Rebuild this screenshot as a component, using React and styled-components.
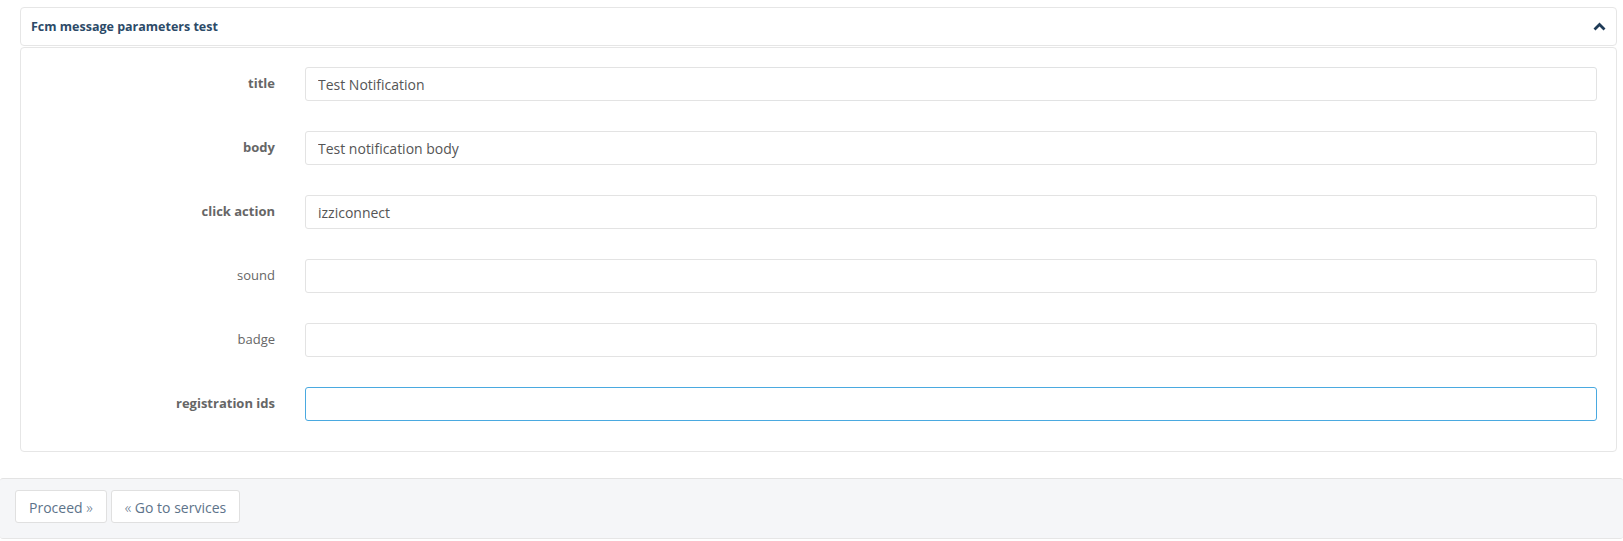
import React from 'react';
import styled, { createGlobalStyle } from 'styled-components';

const GlobalStyle = createGlobalStyle`
  html, body {
    margin: 0;
    padding: 0;
    background: #ffffff;
    font-family: 'Open Sans', 'Liberation Sans', sans-serif;
  }
`;

const fields = [
  { label: 'title', value: 'Test Notification', required: true },
  { label: 'body', value: 'Test notification body', required: true },
  { label: 'click action', value: 'izziconnect', required: true },
  { label: 'sound', value: '' },
  { label: 'badge', value: '' },
  { label: 'registration ids', value: '', required: true, focused: true },
];

const App = () => (
  <>
    <GlobalStyle />
    <Page>
      <Content>
        <PanelHeader>
          <PanelTitle>Fcm message parameters test</PanelTitle>
          <svg width="13" height="9" viewBox="0 0 13 9">
            <polyline
              points="1.5,7.5 6.5,2.5 11.5,7.5"
              fill="none"
              stroke="#1f3b57"
              strokeWidth="2.8"
            />
          </svg>
        </PanelHeader>
        <PanelBody>
          {fields.map((f) => (
            <FormRow key={f.label}>
              <Label $bold={f.required}>{f.label}</Label>
              <Input defaultValue={f.value} $focused={f.focused} />
            </FormRow>
          ))}
        </PanelBody>
      </Content>
      <Footer>
        <Button>Proceed <Angle>»</Angle></Button>
        <Button><Angle>«</Angle> Go to services</Button>
      </Footer>
    </Page>
  </>
);

export default App;

const Page = styled.div`
  display: flex;
  flex-direction: column;
  width: 100%;
  min-height: 541px;
`;

const Content = styled.div`
  display: flex;
  flex-direction: column;
  gap: 1px;
  padding: 7px 6px 0 20px;
`;

const PanelHeader = styled.div`
  display: flex;
  align-items: center;
  justify-content: space-between;
  height: 37px;
  padding: 0 10px 0 10px;
  border: 1px solid #e6e6e6;
  border-radius: 4px;
  background: #fff;
`;

const PanelTitle = styled.span`
  font-size: 12.5px;
  font-weight: 700;
  color: #2c4a68;
`;

const PanelBody = styled.div`
  display: flex;
  flex-direction: column;
  gap: 30px;
  padding: 19px 19px 30px 0;
  border: 1px solid #e6e6e6;
  border-radius: 4px;
  background: #fff;
`;

const FormRow = styled.div`
  display: flex;
  align-items: center;
  gap: 30px;
`;

const Label = styled.label`
  width: 254px;
  flex-shrink: 0;
  text-align: right;
  font-size: 13px;
  font-weight: ${(p) => (p.$bold ? 700 : 400)};
  color: #666;
  margin-top: -3px;
`;

const Input = styled.input`
  flex: 1;
  box-sizing: border-box;
  height: 34px;
  padding: 0 12px;
  border: 1px solid ${(p) => (p.$focused ? '#4aa9e0' : '#e3e3e3')};
  border-radius: 3px;
  font-family: 'Open Sans', 'Liberation Sans', sans-serif;
  font-size: 14px;
  color: #555;
  background: #fff;
  outline: none;
`;

const Footer = styled.div`
  display: flex;
  gap: 4px;
  margin-top: 26px;
  padding: 11px 15px 15px;
  background: #f5f6f8;
  border-top: 1px solid #e3e3e3;
  border-bottom: 1px solid #e6e6e6;
  border-radius: 3px;
`;

const Button = styled.button`
  box-sizing: border-box;
  height: 33px;
  padding: 0 13px;
  border: 1px solid #e0e0e0;
  border-radius: 3px;
  background: #fff;
  font-family: 'Open Sans', 'Liberation Sans', sans-serif;
  font-size: 14px;
  color: #5d738a;
  cursor: pointer;
`;

const Angle = styled.span`
  font-size: 15px;
  font-weight: 300;
`;
